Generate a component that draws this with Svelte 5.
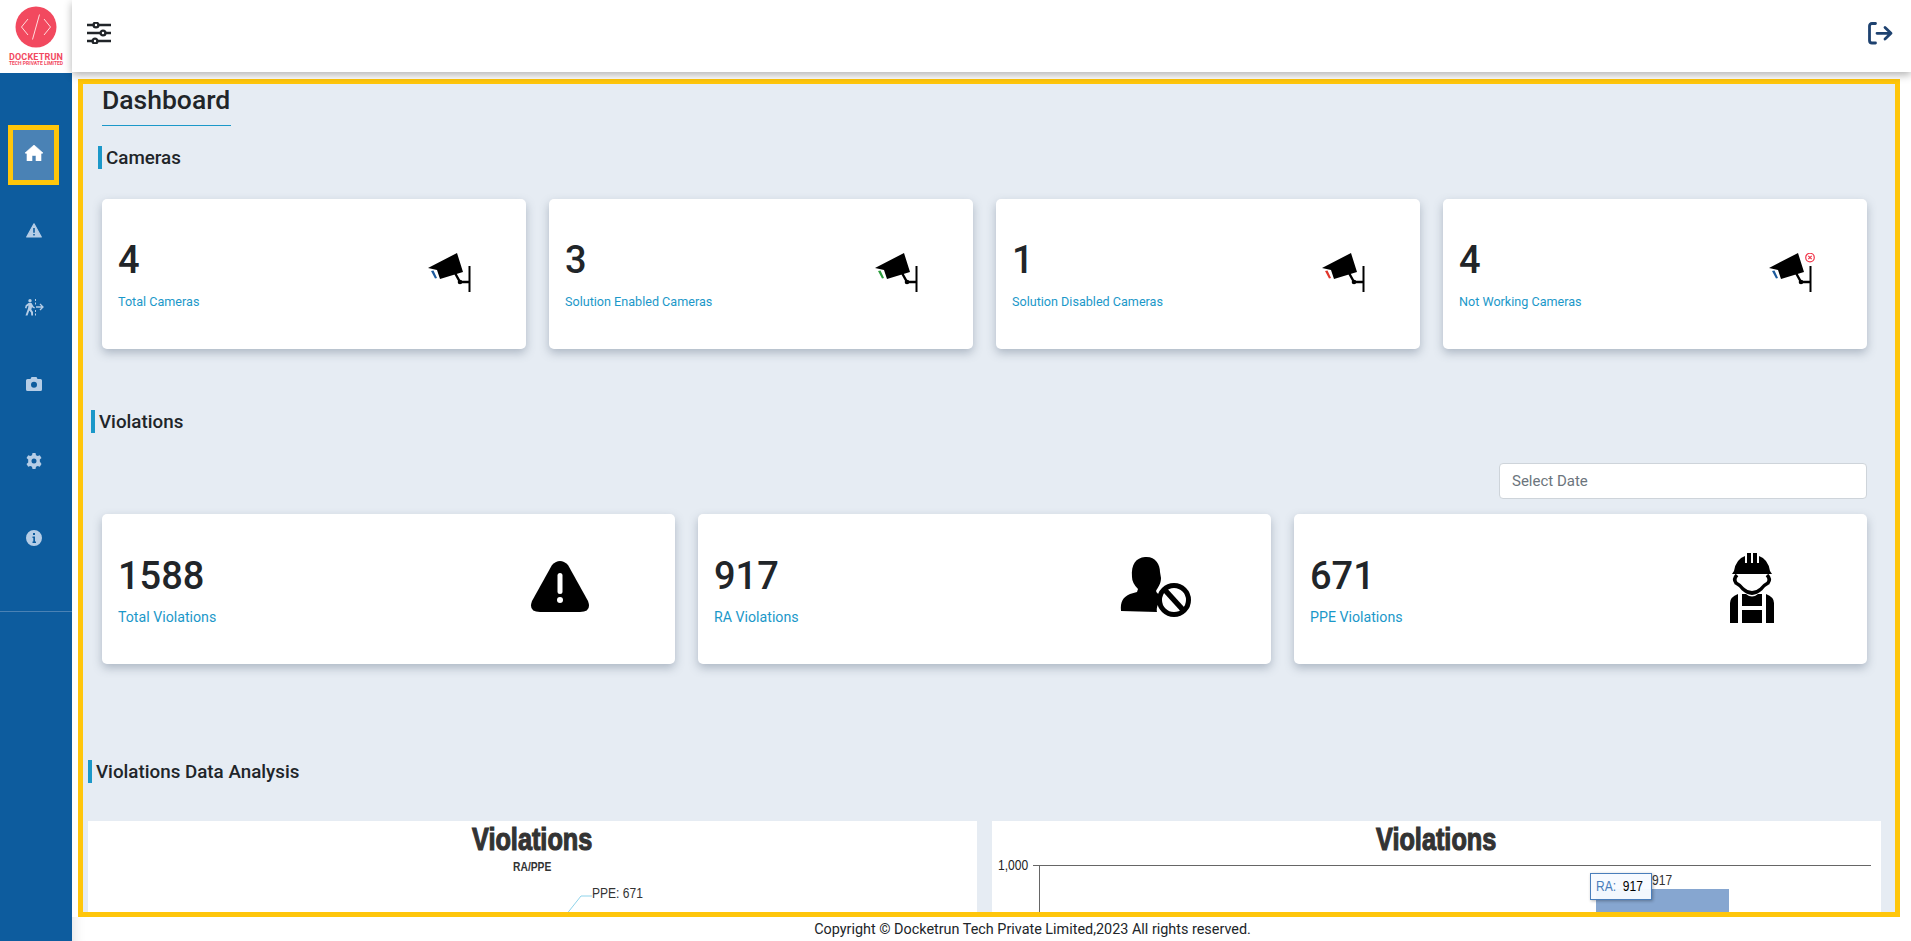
<script>
  // Dashboard screen: cameras + violations summary
  const navItems = ["home", "warn", "exit", "camera", "gear", "info"];

  const cameraCards = [
    { value: 4, label: "Total Cameras", lens: "#1d5a9c", bad: false },
    { value: 3, label: "Solution Enabled Cameras", lens: "#2e9e3f", bad: false },
    { value: 1, label: "Solution Disabled Cameras", lens: "#e0352b", bad: false },
    { value: 4, label: "Not Working Cameras", lens: "#1d5a9c", bad: true },
  ];

  const violationCards = [
    { value: 1588, label: "Total Violations", icon: "warn" },
    { value: 917, label: "RA Violations", icon: "person" },
    { value: 671, label: "PPE Violations", icon: "worker" },
  ];
</script>

<div class="shell">
  <aside class="sidebar">
    <div class="logo">
      <svg width="42" height="42" viewBox="0 0 42 42">
        <circle cx="21" cy="21" r="20.5" fill="#f2495f" />
        <path d="M13 13 L6.5 21 L13 29 M29 13 L35.500 21 L29 29 M24.500 8.500 L17.500 33.500" fill="none" stroke="#fdd" stroke-width="1" />
      </svg>
      <span class="brand">DOCKETRUN</span>
      <span class="brand-sub">TECH PRIVATE LIMITED</span>
    </div>
    <nav class="nav">
      {#each navItems as item, i}
        <div class="nav-item" class:active={i === 0}>
          {#if item === "home"}
            <svg width="18" height="16" viewBox="0 0 18 16" fill="#fff"><path d="M9 0 L18 8 L16 8.500 L16 16 L11 16 L11 10.500 L7 10.500 L7 16 L2 16 L2 8.500 L0 8 Z" stroke="#fff" stroke-width=".6" stroke-linejoin="round" /></svg>
          {:else if item === "warn"}
            <svg width="16" height="15" viewBox="0 0 16 15">
              <path fill="#b5cde6" stroke="#b5cde6" stroke-width="1.200" stroke-linejoin="round" d="M8 .8 L15.300 14 L.7 14 Z" />
              <path fill="#0d5c9e" d="M7.200 5 H8.800 V9.800 H7.200 Z M7.200 11 H8.800 V12.600 H7.200 Z" />
            </svg>
          {:else if item === "exit"}
            <svg width="20" height="17" viewBox="0 0 20 17" fill="#b5cde6">
              <circle cx="6" cy="1.800" r="1.700" />
              <path d="M4.500 4 L7.500 4 L9.500 7.500 L11 8.500 L10.300 9.500 L8 8.300 L7.300 10.500 L9 13 L9 16.500 L7.300 16.500 L7 13.500 L5.300 11.500 L3.500 16.500 L1.500 16.500 L4 9.500 L4.500 6.500 L3 7.500 L2.500 9.500 L1 9 L1.700 6.300 Z" />
              <path d="M11.500 0 V2 M11.500 3.500 V5.500 M11.500 11 V13 M11.500 14.500 V16.500" stroke="#b5cde6" stroke-width="1" />
              <path d="M12 8 H19 M16 5 L19 8 L16 11" fill="none" stroke="#b5cde6" stroke-width="1.300" />
            </svg>
          {:else if item === "camera"}
            <svg width="16" height="14" viewBox="0 0 16 14"><path fill="#b5cde6" fill-rule="evenodd" d="M1.500 2 H4.500 L5.500 0 H10.500 L11.500 2 H14.500 Q16 2 16 3.500 V12.500 Q16 14 14.500 14 H1.500 Q0 14 0 12.500 V3.500 Q0 2 1.500 2 Z M8 4.800 A3 3 0 1 0 8 10.800 A3 3 0 1 0 8 4.800 Z" /></svg>
          {:else if item === "gear"}
            <svg width="16" height="16" viewBox="0 0 16 16"><path fill="#b5cde6" fill-rule="evenodd" d="M6.500 0 H9.500 L10 2.200 L11.700 3.100 L13.800 2.300 L15.500 5 L13.800 6.500 V8.500 L15.500 11 L13.800 13.700 L11.700 12.900 L10 13.800 L9.500 16 H6.500 L6 13.800 L4.300 12.900 L2.200 13.700 L.5 11 L2.200 9.500 V6.500 L.5 5 L2.200 2.300 L4.300 3.100 L6 2.200 Z M8 5.500 A2.500 2.500 0 1 0 8 10.500 A2.500 2.500 0 1 0 8 5.500 Z" /></svg>
          {:else}
            <svg width="16" height="16" viewBox="0 0 16 16"><path fill="#b5cde6" fill-rule="evenodd" d="M8 0 A8 8 0 1 0 8 16 A8 8 0 1 0 8 0 Z M7 3 H9 V5 H7 Z M6.500 6.500 H9 V11.500 H10 V13 H6.500 V11.500 H7.300 V8 H6.500 Z" /></svg>
          {/if}
        </div>
      {/each}
    </nav>
    <div class="nav-rule"></div>
  </aside>

  <div class="right">
    <header class="topbar">
      <svg class="sliders" width="24" height="22" viewBox="0 0 24 22" fill="none" stroke="#212529" stroke-width="2.400">
        <path d="M0 3 H6.500 M11.500 3 H24 M0 11 H13.500 M18.500 11 H24 M0 19 H5.500 M10.500 19 H24" />
        <circle cx="9" cy="3" r="2.400" /><circle cx="16" cy="11" r="2.400" /><circle cx="8" cy="19" r="2.400" />
      </svg>
      <svg class="logout" width="25" height="23" viewBox="0 0 25 23" fill="none" stroke="#1e4270" stroke-width="2.800" stroke-linecap="round" stroke-linejoin="round">
        <path d="M7.500 1.500 H4 Q1.500 1.500 1.500 4 V18.500 Q1.500 21 4 21 H7.500 M9 11.300 H23 M17 5.500 L23 11.300 L17 17" />
      </svg>
    </header>

    <main class="main">
      <div class="page-title"><h1>Dashboard</h1></div>

      <h2 class="section cams-head">Cameras</h2>
      <section class="cards four">
        {#each cameraCards as card}
          <article class="card">
            <div class="card-text">
              <div class="value">{card.value}</div>
              <div class="label">{card.label}</div>
            </div>
            <svg class="cam-icon" width="48" height="40" viewBox="0 0 48 40">
              <path d="M0 15 L29 0 L35 19 L12 26 L9 17 Z" fill="#000" />
              <path d="M3 18 L5.500 17.500 L9 25 L7 25.500 Z" fill={card.lens} />
              <path d="M27 20 L32 29 H42" fill="none" stroke="#000" stroke-width="2.400" />
              <circle cx="32" cy="29" r="2.300" fill="#000" />
              <path d="M41.500 13 V39" stroke="#000" stroke-width="2" />
              {#if card.bad}
                <circle cx="41" cy="4.500" r="4.300" fill="#fff" stroke="#f0384c" stroke-width="1.200" />
                <path d="M39.300 2.800 L42.700 6.200 M42.700 2.800 L39.300 6.200" stroke="#f0384c" stroke-width="1.200" />
              {/if}
            </svg>
          </article>
        {/each}
      </section>

      <h2 class="section viol-head">Violations</h2>
      <div class="date-row"><input class="date" placeholder="Select Date" /></div>
      <section class="cards three">
        {#each violationCards as card}
          <article class="card big">
            <div class="card-text">
              <div class="value">{card.value}</div>
              <div class="label">{card.label}</div>
            </div>
            {#if card.icon === "warn"}
              <svg class="v-icon warn-icon" width="60" height="53" viewBox="0 0 60 53">
                <path fill="#000" d="M22 5 Q30 -3 38 5 L58 41 Q62 52 50 52 H10 Q-2 52 2 41 Z" />
                <rect x="27.500" y="13" width="5" height="21" rx="2.500" fill="#fff" />
                <circle cx="30" cy="40" r="3" fill="#fff" />
              </svg>
            {:else if card.icon === "person"}
              <svg class="v-icon person-icon" width="72" height="62" viewBox="0 0 72 62">
                <path fill="#000" d="M25 1 C35 0 40 8 40 16 L41 22 C41 28 38 31 36 35 L37 37 C41 40 40 39 44 37 L44 42 C38 46 36 52 37 56 L1 55 C0 46 3 41 10 38 L17 36 L18 33 C14 29 12 25 12 21 C11 8 16 2 25 1 Z" />
                <circle cx="54" cy="44" r="14.500" fill="#fff" stroke="#000" stroke-width="5" />
                <path d="M44 33 L64 55" stroke="#000" stroke-width="5.500" />
              </svg>
            {:else}
              <svg class="v-icon worker-icon" width="44" height="72" viewBox="0 0 44 72">
                <path fill="#000" d="M4 19 Q6 7 15 4 L15 11 H17 V1 H21 V11 H23 V1 H27 V11 H29 V4 Q38 7 40 19 L42 22 H2 Z" />
                <path d="M7 23 Q3 27 6 31 Q10 33 13 37 Q22 45 31 37 Q34 33 38 31 Q41 27 37 23" fill="none" stroke="#000" stroke-width="3.600" />
                <path fill="#000" d="M0 71 V51 Q0 45 8 42 L8 71 Z M44 71 V51 Q44 45 36 42 L36 71 Z M12 42 H16 Q22 47 28 42 H32 V54 H12 Z M12 58 H32 V71 H12 Z" />
              </svg>
            {/if}
          </article>
        {/each}
      </section>

      <h2 class="section data-head">Violations Data Analysis</h2>
      <section class="charts">
        <div class="chart">
          <div class="chart-title"><span>Violations</span></div>
          <div class="chart-sub"><span>RA/PPE</span></div>
          <svg class="leader" width="30" height="30" viewBox="0 0 30 30">
            <path d="M0.500 27 L14 10 H25" fill="none" stroke="#8fd3ea" stroke-width="1" />
          </svg>
          <span class="pie-label narrow">PPE: 671</span>
        </div>
        <div class="chart">
          <div class="chart-title"><span>Violations</span></div>
          <span class="axis-label narrow">1,000</span>
          <div class="axis-top"></div>
          <div class="axis-left"></div>
          <div class="bar"></div>
          <span class="bar-value narrow">917</span>
          <div class="tooltip"><span class="narrow"><span class="tip-key">RA:</span> 917</span></div>
        </div>
      </section>
    </main>

    <footer class="footer">Copyright © Docketrun Tech Private Limited,2023 All rights reserved.</footer>
  </div>
</div>

<style>
  :global(body) {
    margin: 0;
    background: #fff;
    font-family: Roboto, "Liberation Sans", sans-serif;
    color: #212529;
  }

  .shell {
    display: flex;
    height: 941px;
    overflow: hidden;
  }

  .sidebar {
    width: 72px;
    flex: none;
    background: #0d5c9e;
    display: flex;
    flex-direction: column;
  }

  .logo {
    height: 73px;
    background: #fff;
    display: flex;
    flex-direction: column;
    align-items: center;
    padding-top: 6px;
    box-sizing: border-box;
    color: #f2495f;
  }

  .brand {
    font-size: 9px;
    font-weight: 700;
    line-height: 8px;
    margin-top: 5px;
    letter-spacing: 0.2px;
  }

  .brand-sub {
    font-size: 5px;
    font-weight: 700;
    line-height: 5px;
  }

  .nav {
    padding-top: 57px;
    display: flex;
    flex-direction: column;
  }

  .nav-item {
    width: 41px;
    height: 46px;
    padding-bottom: 4px;
    margin: 0 0 27px 13px;
    display: flex;
    align-items: center;
    justify-content: center;
  }

  .nav-item.active {
    background: #4a82b5;
    outline: 5px solid #ffc60b;
  }

  .nav-rule {
    border-top: 1px solid #4a82b5;
    margin-top: 19px;
  }

  .right {
    flex: 1;
    min-width: 0;
    display: flex;
    flex-direction: column;
  }

  .topbar {
    height: 72px;
    flex: none;
    display: flex;
    align-items: center;
    justify-content: space-between;
    padding: 0 18px 0 15px;
    background: #fff;
    box-shadow: 0 3px 8px rgba(0, 0, 0, 0.3);
    position: relative;
    z-index: 1;
  }

  .sliders {
    margin-top: -6px;
  }

  .logout {
    margin-top: -6px;
  }

  .main {
    height: 839px;
    margin: 7px 11px 0 6px;
    border: 5px solid #ffc60b;
    box-sizing: border-box;
    background: #e6ecf3;
    overflow: hidden;
    padding: 0 28px 0 19px;
  }

  .page-title h1 {
    display: inline-block;
    margin: 0;
    font-size: 26.500px;
    font-weight: 500;
    line-height: 31px;
    height: 41px;
    padding-right: 1px;
    border-bottom: 1.500px solid #1b98c9;
  }

  .section {
    margin: 0;
    font-size: 18.800px;
    font-weight: 500;
    line-height: 25px;
    height: 23px;
    border-left: 4px solid #1b98c9;
    padding-left: 4px;
  }

  .cams-head {
    margin: 20px 0 0 -4px;
  }

  .viol-head {
    margin: 61px 0 0 -11px;
  }

  .data-head {
    margin: 96px 0 0 -14px;
  }

  .cards {
    display: grid;
    gap: 23px;
  }

  .cards.four {
    grid-template-columns: repeat(4, 1fr);
    margin-top: 30px;
  }

  .cards.three {
    grid-template-columns: repeat(3, 1fr);
    margin-top: 15px;
  }

  .card {
    background: #fff;
    height: 150px;
    border-radius: 5px;
    box-shadow: 0 4px 10px rgba(70, 85, 110, 0.35);
    display: flex;
    align-items: flex-start;
    justify-content: space-between;
    padding: 0 16px;
    box-sizing: border-box;
    position: relative;
  }

  .card-text {
    padding-top: 39px;
  }

  .big .card-text {
    padding-top: 40px;
  }

  .value {
    font-size: 38px;
    font-weight: 500;
    line-height: 44px;
  }

  .label {
    font-size: 12.600px;
    color: #1b98c9;
    margin-top: 12px;
    line-height: 16px;
  }

  .big .label {
    font-size: 14.200px;
    margin-top: 11px;
  }

  .cam-icon {
    position: absolute;
    left: 326px;
    top: 54px;
  }

  .v-icon {
    position: absolute;
  }

  .warn-icon {
    left: 428px;
    top: 46px;
  }

  .person-icon {
    left: 422px;
    top: 42px;
  }

  .worker-icon {
    left: 436px;
    top: 38px;
  }

  .date-row {
    display: flex;
    justify-content: flex-end;
    margin-top: 30px;
  }

  .date {
    width: 368px;
    height: 36px;
    box-sizing: border-box;
    border: 1px solid #ced4da;
    border-radius: 4px;
    padding: 0 12px;
    font-family: Roboto, sans-serif;
    font-size: 15px;
    background: #fff;
  }

  .date::placeholder {
    color: #6c757d;
    opacity: 1;
  }

  .charts {
    display: grid;
    grid-template-columns: 889px 889px;
    gap: 15px;
    margin: 38px 0 0 -14px;
  }

  .chart {
    background: #fff;
    height: 120px;
    position: relative;
    text-align: center;
    color: #333;
    font-family: "Liberation Sans", sans-serif;
  }

  .chart-title {
    line-height: 32px;
    padding-top: 2px;
    font-size: 32px;
    font-weight: 700;
    -webkit-text-stroke: 1.200px #333;
  }

  .chart-title span,
  .chart-sub span {
    display: inline-block;
    transform: scaleX(0.79);
  }

  .chart-sub {
    font-size: 13px;
    font-weight: 700;
    line-height: 14px;
    margin-top: 5px;
  }

  .narrow {
    display: inline-block;
    transform: scaleX(0.86);
    transform-origin: left center;
    white-space: nowrap;
  }

  .leader {
    position: absolute;
    left: 479px;
    top: 65px;
  }

  .pie-label {
    position: absolute;
    left: 504px;
    top: 64px;
    font-size: 14px;
  }

  .axis-label {
    position: absolute;
    left: 6px;
    top: 36px;
    font-size: 14px;
    color: #222;
  }

  .axis-top {
    position: absolute;
    left: 41px;
    right: 10px;
    top: 44px;
    border-top: 1px solid #666;
  }

  .axis-left {
    position: absolute;
    left: 47px;
    top: 44px;
    bottom: 0;
    border-left: 1px solid #666;
  }

  .bar {
    position: absolute;
    left: 604px;
    width: 133px;
    top: 68px;
    bottom: 0;
    background: #86a6d0;
  }

  .bar-value {
    position: absolute;
    left: 660px;
    top: 51px;
    font-size: 14px;
  }

  .tooltip {
    position: absolute;
    left: 598px;
    top: 52px;
    width: 62px;
    height: 27px;
    box-sizing: border-box;
    padding-left: 5px;
    text-align: left;
    background: rgba(247, 250, 255, 0.96);
    border: 1px solid #4a7ebb;
    box-shadow: 1px 1px 3px rgba(0, 0, 0, 0.3);
    font-size: 14px;
    line-height: 25px;
    color: #000;
  }

  .tip-key {
    color: #4a7ebb;
    margin-right: 4px;
  }

  .footer {
    flex: 1;
    text-align: center;
    font-size: 14.400px;
    line-height: 23px;
    padding: 1px 0 0 82px;
    color: #212529;
    box-shadow: inset 14px 0 14px -14px rgba(0, 0, 0, 0.15);
  }
</style>
